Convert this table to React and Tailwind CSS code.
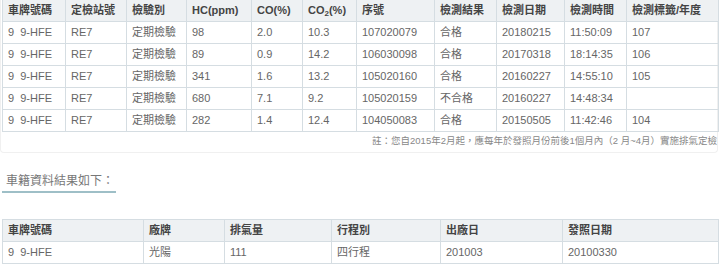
import React from "react";

const inspections = [
  ["9  9-HFE", "RE7", "定期檢驗", "98", "2.0", "10.3", "107020079", "合格", "20180215", "11:50:09", "107"],
  ["9  9-HFE", "RE7", "定期檢驗", "89", "0.9", "14.2", "106030098", "合格", "20170318", "18:14:35", "106"],
  ["9  9-HFE", "RE7", "定期檢驗", "341", "1.6", "13.2", "105020160", "合格", "20160227", "14:55:10", "105"],
  ["9  9-HFE", "RE7", "定期檢驗", "680", "7.1", "9.2", "105020159", "不合格", "20160227", "14:48:34", ""],
  ["9  9-HFE", "RE7", "定期檢驗", "282", "1.4", "12.4", "104050083", "合格", "20150505", "11:42:46", "104"],
];

const topCols = [63, 61, 60, 65, 51, 54, 78, 62, 68, 62, 92];
const topHead = [
  "車牌號碼",
  "定檢站號",
  "檢驗別",
  "HC(ppm)",
  "CO(%)",
  <>CO<sub className="text-[8px]">2</sub>(%)</>,
  "序號",
  "檢測結果",
  "檢測日期",
  "檢測時間",
  "檢測標籤/年度",
];

const carCols = [141, 81, 107, 109, 122, 156];
const carHead = ["車牌號碼", "廠牌", "排氣量", "行程別", "出廠日", "發照日期"];
const carRow = ["9  9-HFE", "光陽", "111", "四行程", "201003", "20100330"];

export default function App() {
  return (
    <div
      className="w-[720px] h-[267px] overflow-hidden bg-white text-[11px] text-[#666]"
      style={{ fontFamily: '"Liberation Sans", Arial, "Noto Sans CJK TC", sans-serif' }}
    >
      {/* 定檢紀錄 */}
      <div className="w-[718px] border border-t-0 border-[#f0f0f0] rounded-b pl-px">
        <table className="table-fixed border-collapse w-[716px]">
          <colgroup>
            {topCols.map((w, i) => (
              <col key={i} style={{ width: w }} />
            ))}
          </colgroup>
          <thead>
            <tr className="h-[21px] bg-[#eef1f3]">
              {topHead.map((h, i) => (
                <th
                  key={i}
                  className="border border-t-0 border-[#d5dde2] px-[5px] text-left font-bold text-[#444] whitespace-nowrap leading-none"
                >
                  {h}
                </th>
              ))}
            </tr>
          </thead>
          <tbody>
            {inspections.map((row, r) => (
              <tr key={r} className="h-[22px]">
                {row.map((c, i) => (
                  <td
                    key={i}
                    className="border border-[#d5dde2] px-[5px] whitespace-pre leading-none"
                  >
                    {c}
                  </td>
                ))}
              </tr>
            ))}
          </tbody>
        </table>
        <div className="h-[20px] flex items-center justify-end whitespace-nowrap text-[9.5px] text-[#888]">
          註：您自2015年2月起，應每年於發照月份前後1個月內（2 月~4月）實施排氣定檢
        </div>
      </div>

      {/* 車籍資料 */}
      <div className="mt-[20px] ml-[2px] w-[114px] pl-[4px] pb-[1px] border-b-2 border-[#9ebfc7] text-[12px] text-[#777] leading-[17px]">
        車籍資料結果如下：
      </div>

      <table className="mt-[26px] ml-[2px] table-fixed border-collapse w-[716px]">
        <colgroup>
          {carCols.map((w, i) => (
            <col key={i} style={{ width: w }} />
          ))}
        </colgroup>
        <thead>
          <tr className="h-[22px] bg-[#eef1f3]">
            {carHead.map((h, i) => (
              <th
                key={i}
                className="border border-[#d5dde2] px-[5px] text-left font-bold text-[#444] leading-none"
              >
                {h}
              </th>
            ))}
          </tr>
        </thead>
        <tbody>
          <tr className="h-[22px]">
            {carRow.map((c, i) => (
              <td key={i} className="border border-[#d5dde2] px-[5px] whitespace-pre leading-none">
                {c}
              </td>
            ))}
          </tr>
        </tbody>
      </table>
    </div>
  );
}
